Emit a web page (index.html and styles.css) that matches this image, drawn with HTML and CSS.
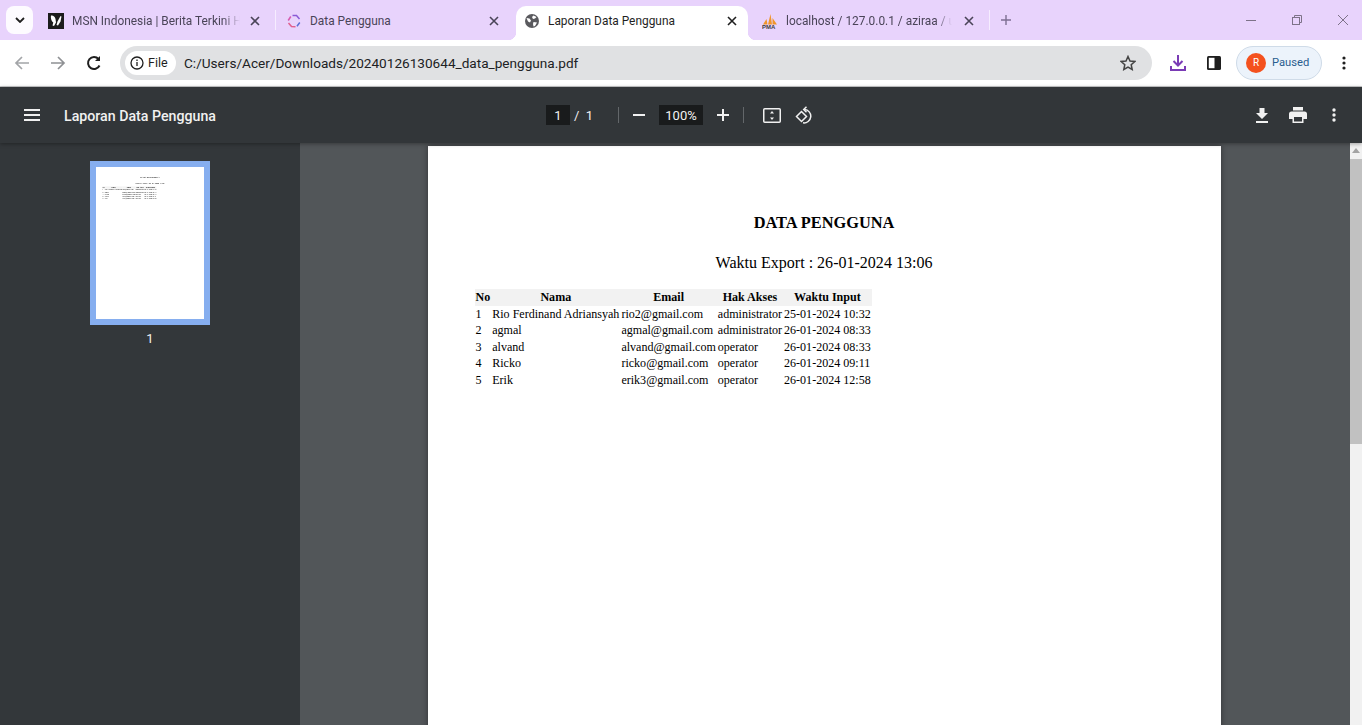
FILE: index.html
```html
<!DOCTYPE html>
<html lang="en">
<head>
<meta charset="UTF-8" />
<title>Laporan Data Pengguna</title>
<link rel="stylesheet" href="styles.css">
</head>
<body>
<div class="tabstrip">
  <button class="tab-search"><svg width="10" height="6" viewBox="0 0 10 6"><path d="M1 1l4 4 4-4" fill="none" stroke="#1f1f1f" stroke-width="1.8"/></svg></button>

  <div class="tab tab-one">
    <svg class="fav" width="16" height="16" viewBox="0 0 16 16"><rect width="16" height="16" fill="#1c1c1c"/><path d="M3 2.500c2-.5 4 1 4.500 3.500l.5 3.500-2 3.500-1.500-.5.800-3C3.500 8.500 2.500 5 3 2.500z" fill="#fff"/><path d="M9.500 8.500L12.500 3l1 .5-1 5-2.500 4-1.500-.5z" fill="#fff"/></svg>
    <span class="tab-title">MSN Indonesia | Berita Terkini Hari Ini</span>
    <svg class="tab-close" width="10" height="10" viewBox="0 0 10 10"><path d="M1 1l8 8M9 1l-8 8" stroke="#4a4458" stroke-width="1.6"/></svg>
  </div>
  <i class="tab-sep"></i>
  <div class="tab tab-two">
    <svg class="fav" width="14" height="14" viewBox="0 0 14 14" fill="none" stroke-width="1.5"><path d="M5.500 1.500L9.500 1.500 12.500 5" stroke="#8a5bd6"/><path d="M12.800 8.500L10 12.300" stroke="#5b6fd6"/><path d="M8.500 12.800L4.500 12.500 1.500 9" stroke="#e0608e"/><path d="M1.200 6.500L3.800 2.500" stroke="#d65bb0"/></svg>
    <span class="tab-title">Data Pengguna</span>
    <svg class="tab-close" width="10" height="10" viewBox="0 0 10 10"><path d="M1 1l8 8M9 1l-8 8" stroke="#4a4458" stroke-width="1.6"/></svg>
  </div>
  <div class="tab tab-active">
    <svg class="fav" width="14" height="14" viewBox="0 0 14 14"><circle cx="7" cy="7" r="7" fill="#5a5a5e"/><path d="M1.500 4l3 .5L6 6.500 5 8.500 3 7.500zM8.500 1.500l3 1.500-1.500 1.500-2 .5-1-2zM8.500 8l3.500.5L10 12l-1.500.5L8 10z" fill="#fff"/></svg>
    <span class="tab-title">Laporan Data Pengguna</span>
    <svg class="tab-close" width="10" height="10" viewBox="0 0 10 10"><path d="M1 1l8 8M9 1l-8 8" stroke="#1f1f1f" stroke-width="1.6"/></svg>
  </div>
  <div class="tab tab-four">
    <svg class="fav" width="16" height="16" viewBox="0 0 16 16"><path d="M1 11.500L4.500 6 5.500 11.500zM6 11.500L8.500 1 10 11.500zM10.500 11.500L10.500 5 15 11.500z" fill="#f0952a"/><text x="0" y="16" class="pma">PMA</text></svg>
    <span class="tab-title">localhost / 127.0.0.1 / aziraa / users</span>
    <svg class="tab-close" width="10" height="10" viewBox="0 0 10 10"><path d="M1 1l8 8M9 1l-8 8" stroke="#4a4458" stroke-width="1.6"/></svg>
  </div>
  <i class="tab-sep"></i>
  <svg class="new-tab" width="12" height="12" viewBox="0 0 12 12"><path d="M6 1v10M1 6h10" stroke="#7d6f92" stroke-width="1.4"/></svg>

  <div class="win-controls">
    <svg width="12" height="12" viewBox="0 0 12 12"><path d="M1 6.500h10" stroke="#7d7288"/></svg>
    <svg width="12" height="12" viewBox="0 0 12 12" fill="none" stroke="#7d7288"><rect x="1.500" y="3.500" width="7" height="7"/><path d="M3.500 3.500v-2h7v7h-2"/></svg>
    <svg width="12" height="12" viewBox="0 0 12 12"><path d="M1 1l10 10M11 1L1 11" stroke="#7d7288"/></svg>
  </div>
</div>

<div class="toolbar">
  <svg class="nav-icon" width="16" height="16" viewBox="0 0 16 16" fill="none" stroke="#a3a5a8" stroke-width="1.7"><path d="M15 8H2M8 2L2 8l6 6"/></svg>
  <svg class="nav-icon" width="16" height="16" viewBox="0 0 16 16" fill="none" stroke="#8f9194" stroke-width="1.7"><path d="M1 8h13M8 2l6 6-6 6"/></svg>
  <svg class="nav-icon" width="16" height="16" viewBox="0 0 16 16" fill="none" stroke="#1f1f1f" stroke-width="2"><path d="M13.500 10.500A6 6 0 1 1 12.500 4"/><path d="M14 1v5H9z" stroke="none" fill="#1f1f1f"/></svg>
  <div class="omnibox">
    <div class="chip">
      <svg width="14" height="14" viewBox="0 0 14 14" fill="none" stroke="#1f1f1f" stroke-width="1.300"><circle cx="7" cy="7" r="6"/><path d="M7 6v4M7 3.500v1.500"/></svg>
      <span>File</span>
    </div>
    <span class="url">C:/Users/Acer/Downloads/20240126130644_data_pengguna.pdf</span>
    <svg class="star" width="16" height="16" viewBox="0 0 16 16" fill="none" stroke="#444" stroke-width="1.500"><path d="M8 1.500l2 4.500 4.800.5-3.600 3.200 1 4.800L8 12.100l-4.200 2.400 1-4.800L1.200 6.500 6 6z"/></svg>
  </div>
  <svg class="tool-icon" width="16" height="16" viewBox="0 0 16 16" fill="none" stroke="#7a3bb5" stroke-width="2"><path d="M8 0v10M3.500 6L8 10.500 12.500 6M1 11v4h14v-4"/></svg>
  <svg class="tool-icon" width="16" height="16" viewBox="0 0 16 16"><rect x="1" y="1" width="14" height="14" rx="1.500" fill="#1f1f1f"/><rect x="2.800" y="2.800" width="5.700" height="10.400" fill="#fff"/></svg>
  <div class="profile">
    <span class="avatar">R</span>
    <span class="paused">Paused</span>
  </div>
  <svg class="kebab" width="4" height="14" viewBox="0 0 4 14" fill="#1f1f1f"><circle cx="2" cy="2" r="1.600"/><circle cx="2" cy="7" r="1.600"/><circle cx="2" cy="12" r="1.600"/></svg>
</div>

<div class="pdf-bar">
  <div class="pdf-left">
    <svg width="16" height="12" viewBox="0 0 16 12" fill="#f1f1f1"><rect width="16" height="2"/><rect y="5" width="16" height="2"/><rect y="10" width="16" height="2"/></svg>
    <span class="pdf-title">Laporan Data Pengguna</span>
  </div>
  <div class="pdf-center">
    <span class="num-box page-box">1</span>
    <span class="page-total">/&nbsp; 1</span>
    <i class="pdf-sep sep-page"></i>
    <svg width="12" height="2" viewBox="0 0 12 2" fill="#f1f1f1"><rect width="12" height="2"/></svg>
    <span class="num-box zoom-box">100%</span>
    <svg width="12" height="12" viewBox="0 0 12 12" fill="#f1f1f1"><path d="M5 0h2v5h5v2H7v5H5V7H0V5h5z"/></svg>
    <i class="pdf-sep sep-zoom"></i>
    <svg width="18" height="15" viewBox="0 0 18 15"><rect x="0.750" y="0.750" width="16.500" height="13.500" rx="1" fill="none" stroke="#f1f1f1" stroke-width="1.500"/><path d="M9 3l2 2.500H7zM9 12L7 9.500h4z" fill="#f1f1f1"/></svg>
    <svg class="rotate" width="18" height="18" viewBox="0 0 18 18" fill="none" stroke="#f1f1f1" stroke-width="1.500"><path d="M6.500 5.500L1.500 10.500l5 5 5-5z"/><path d="M9.500 3.500a6.700 6.700 0 1 1-1.500 13.300"/><path d="M11.500 0.800L8.700 3.500l2.800 2.700"/></svg>
  </div>
  <div class="pdf-right">
    <svg class="pdf-save" width="14" height="15" viewBox="0 0 14 15" fill="#f1f1f1"><path d="M4.500 0h5v5H13L7 11 1 5h3.500zM1 13h12v2H1z"/></svg>
    <svg class="pdf-print" width="18" height="16" viewBox="0 0 18 16" fill="#f1f1f1"><path d="M4 0h10v3.500H4zM2.500 4.500h13A2.500 2.500 0 0 1 18 7v5h-3.500v4h-11v-4H0V7a2.500 2.500 0 0 1 2.500-2.500z"/><rect x="5" y="10" width="8" height="4.500" fill="#323639"/></svg>
    <svg width="4" height="14" viewBox="0 0 4 14" fill="#f1f1f1"><circle cx="2" cy="2" r="1.700"/><circle cx="2" cy="7" r="1.700"/><circle cx="2" cy="12" r="1.700"/></svg>
  </div>
</div>

<div class="viewer">
  <aside class="sidebar">
    <div class="thumb">
      <div class="thumb-inner">
        <div class="doc">
          <h2>DATA PENGGUNA</h2>
          <p class="export">Waktu Export : 26-01-2024 13:06</p>
          <table>
            <thead><tr><th>No</th><th>Nama</th><th>Email</th><th>Hak Akses</th><th>Waktu Input</th></tr></thead>
            <tbody>
              <tr><td>1</td><td>Rio Ferdinand Adriansyah</td><td>rio2@gmail.com</td><td>administrator</td><td>25-01-2024 10:32</td></tr>
              <tr><td>2</td><td>agmal</td><td>agmal@gmail.com</td><td>administrator</td><td>26-01-2024 08:33</td></tr>
              <tr><td>3</td><td>alvand</td><td>alvand@gmail.com</td><td>operator</td><td>26-01-2024 08:33</td></tr>
              <tr><td>4</td><td>Ricko</td><td>ricko@gmail.com</td><td>operator</td><td>26-01-2024 09:11</td></tr>
              <tr><td>5</td><td>Erik</td><td>erik3@gmail.com</td><td>operator</td><td>26-01-2024 12:58</td></tr>
            </tbody>
          </table>
        </div>
      </div>
    </div>
    <div class="thumb-num">1</div>
  </aside>

  <main class="stage">
    <div class="doc page">
      <h2>DATA PENGGUNA</h2>
      <p class="export">Waktu Export : 26-01-2024 13:06</p>
      <table>
        <thead><tr><th>No</th><th>Nama</th><th>Email</th><th>Hak Akses</th><th>Waktu Input</th></tr></thead>
        <tbody>
          <tr><td>1</td><td>Rio Ferdinand Adriansyah</td><td>rio2@gmail.com</td><td>administrator</td><td>25-01-2024 10:32</td></tr>
          <tr><td>2</td><td>agmal</td><td>agmal@gmail.com</td><td>administrator</td><td>26-01-2024 08:33</td></tr>
          <tr><td>3</td><td>alvand</td><td>alvand@gmail.com</td><td>operator</td><td>26-01-2024 08:33</td></tr>
          <tr><td>4</td><td>Ricko</td><td>ricko@gmail.com</td><td>operator</td><td>26-01-2024 09:11</td></tr>
          <tr><td>5</td><td>Erik</td><td>erik3@gmail.com</td><td>operator</td><td>26-01-2024 12:58</td></tr>
        </tbody>
      </table>
    </div>
  </main>

  <div class="scrollbar">
    <svg width="8" height="5" viewBox="0 0 8 5" fill="#a3a3a3"><path d="M4 0l4 5H0z"/></svg>
    <div class="scroll-thumb"></div>
  </div>
</div>
</body>
</html>
```

FILE: styles.css
```css
* {
  box-sizing: border-box;
}
html, body {
  height: 100%;
}
body {
  margin: 0;
  display: flex;
  flex-direction: column;
  overflow: hidden;
  font-family: Roboto, "Noto Sans", sans-serif;
  background: #525659;
}

/* tab strip */
.tabstrip {
  height: 40px;
  flex: none;
  background: #e8d3fc;
  display: flex;
  align-items: flex-start;
}
.tab-search {
  width: 27px;
  height: 28px;
  margin: 6px 6px 0 6px;
  padding: 0;
  border: none;
  border-radius: 8px;
  background: #fdfbff;
  display: flex;
  align-items: center;
  justify-content: center;
}
.tab {
  height: 34px;
  margin-top: 6px;
  padding-bottom: 5px;
  display: flex;
  align-items: center;
  font-size: 11.900px;
  color: #4a4458;
}
.tab-title {
  flex: 1;
  overflow: hidden;
  white-space: nowrap;
  -webkit-mask-image: linear-gradient(to right, #000 90%, transparent 100%);
  mask-image: linear-gradient(to right, #000 90%, transparent 100%);
}
.fav {
  flex: none;
}
.tab-close {
  flex: none;
}
.tab-one {
  width: 236px;
  padding-left: 9px;
  padding-right: 15px;
}
.tab-one .tab-title {
  margin: 0 10px 0 8px;
}
.tab-sep {
  width: 1px;
  height: 20px;
  margin-top: 10px;
  background: #f6edff;
  flex: none;
}
.tab-two {
  width: 240px;
  padding-left: 11px;
  padding-right: 17px;
}
.tab-two .tab-title {
  margin: 0 10px 0 9px;
  -webkit-mask-image: none;
  mask-image: none;
}
.tab-active {
  position: relative;
  width: 232px;
  padding-left: 9px;
  padding-right: 11px;
  background: #fff;
  border-radius: 10px 10px 0 0;
  color: #1f1f1f;
}
.tab-active::before,
.tab-active::after {
  content: "";
  position: absolute;
  bottom: 0;
  width: 8px;
  height: 8px;
}
.tab-active::before {
  left: -8px;
  background: radial-gradient(circle at 0 0, transparent 8px, #fff 8.500px);
}
.tab-active::after {
  right: -8px;
  background: radial-gradient(circle at 100% 0, transparent 8px, #fff 8.500px);
}
.tab-active .tab-title {
  margin: 0 10px 0 9px;
  -webkit-mask-image: none;
  mask-image: none;
}
.tab-four {
  width: 241px;
  padding-left: 14px;
  padding-right: 15px;
}
.tab-four .tab-title {
  margin: 0 12px 0 8px;
}
.pma {
  font-family: "Liberation Sans", sans-serif;
  font-size: 6px;
  font-weight: 700;
  fill: #3c3c3c;
}
.new-tab {
  margin: 14px 0 0 10px;
  flex: none;
}
.win-controls {
  margin-left: auto;
  width: 138px;
  height: 40px;
  display: flex;
  align-items: center;
  justify-content: space-between;
  padding: 0 13px 0 21px;
}

/* address bar */
.toolbar {
  height: 47px;
  flex: none;
  background: #fff;
  border-bottom: 1px solid #c9cacb;
  display: flex;
  align-items: center;
  padding: 0 0 1px 14px;
}
.nav-icon {
  margin-right: 20px;
  flex: none;
}
.nav-icon:nth-child(3) {
  margin-right: 18px;
}
.omnibox {
  width: 1032px;
  height: 34px;
  border-radius: 17px;
  background: #e0e1e3;
  display: flex;
  align-items: center;
  padding: 0 16px 0 5px;
}
.chip {
  width: 51px;
  height: 24px;
  border-radius: 12px;
  background: #fff;
  display: flex;
  align-items: center;
  gap: 4px;
  padding-left: 5px;
  font-size: 12.500px;
  color: #1f1f1f;
}
.url {
  margin-left: 8px;
  font-size: 13.600px;
  color: #202124;
}
.star {
  margin-left: auto;
}
.tool-icon {
  margin-left: 18px;
  flex: none;
}
.tool-icon + .tool-icon {
  margin-left: 20px;
}
.profile {
  width: 86px;
  height: 34px;
  margin-left: 14px;
  border: 1px solid #cfdbe8;
  border-radius: 17px;
  background: #ecf3fb;
  display: flex;
  align-items: center;
  gap: 6px;
  padding-left: 9px;
}
.avatar {
  width: 20px;
  height: 20px;
  border-radius: 50%;
  background: #f4511e;
  color: #fff;
  font-size: 10px;
  display: flex;
  align-items: center;
  justify-content: center;
}
.paused {
  font-size: 11.200px;
  color: #2a5d8f;
}
.kebab {
  margin-left: 20px;
  flex: none;
}

/* pdf toolbar */
.pdf-bar {
  position: relative;
  z-index: 2;
  height: 56px;
  flex: none;
  background: #323639;
  box-shadow: 0 1px 4px rgb(0 0 0 / 0.35);
  color: #f1f1f1;
  display: flex;
  align-items: center;
}
.pdf-left {
  width: 546px;
  flex: none;
  display: flex;
  align-items: center;
  gap: 24px;
  padding-left: 24px;
}
.pdf-title {
  font-size: 14.200px;
  font-weight: 500;
  padding-top: 1px;
}
.pdf-center {
  display: flex;
  align-items: center;
  font-size: 13px;
}
.num-box {
  height: 20px;
  background: #191b1c;
  display: flex;
  align-items: center;
  justify-content: center;
}
.page-box {
  width: 24px;
}
.page-total {
  width: 48px;
  padding-left: 4px;
}
.pdf-sep {
  width: 1px;
  height: 16px;
  background: #63676a;
}
.sep-page {
  margin-right: 14px;
}
.zoom-box {
  width: 44px;
  margin: 0 14px;
}
.sep-zoom {
  margin: 0 19px 0 14px;
}
.rotate {
  margin-left: 14px;
}
.pdf-right {
  margin-left: auto;
  display: flex;
  align-items: center;
  padding-right: 26px;
}
.pdf-save {
  margin-right: 20px;
}
.pdf-print {
  margin-right: 25px;
}

/* viewer */
.viewer {
  flex: 1;
  min-height: 0;
  display: flex;
}
.sidebar {
  width: 300px;
  flex: none;
  background: #33373a;
  display: flex;
  flex-direction: column;
  align-items: center;
  padding-top: 18px;
}
.thumb {
  width: 120px;
  height: 164px;
  border: 6px solid #86aeef;
  background: #fff;
  overflow: hidden;
}
.thumb-inner {
  width: 793px;
  height: 1122px;
  transform: scale(0.136);
  transform-origin: 0 0;
}
.thumb-num {
  margin-top: 6px;
  font-size: 13px;
  color: #f1f1f1;
}
.stage {
  flex: 1;
  min-width: 0;
  display: flex;
  justify-content: center;
  padding: 3px 2px 0 0;
  overflow: hidden;
}
.page {
  height: 1122px;
  box-shadow: 0 0 6px rgb(0 0 0 / 0.4);
}
.doc {
  width: 793px;
  flex: none;
  background: #fff;
  color: #000;
  font-family: "Liberation Serif", serif;
  padding: 67px 47px 0 47px;
}
.doc h2 {
  margin: 0;
  font-size: 16.350px;
  line-height: 20px;
  font-weight: 700;
  text-align: center;
}
.export {
  margin: 21px 0 17px 0;
  font-size: 16.050px;
  line-height: 18px;
  text-align: center;
}
.doc table {
  border-collapse: collapse;
  font-size: 12.050px;
  line-height: 16.600px;
}
.doc th {
  background: #f2f2f2;
  padding: 0 1px;
  font-weight: 700;
  text-align: center;
}
.doc td {
  padding: 0 1px;
  white-space: nowrap;
}
.scrollbar {
  width: 12px;
  flex: none;
  background: #f1f1f1;
  display: flex;
  flex-direction: column;
  align-items: center;
  padding-top: 5px;
}
.scroll-thumb {
  width: 100%;
  height: 285px;
  margin-top: 6px;
  background: #c1c1c1;
}
```
